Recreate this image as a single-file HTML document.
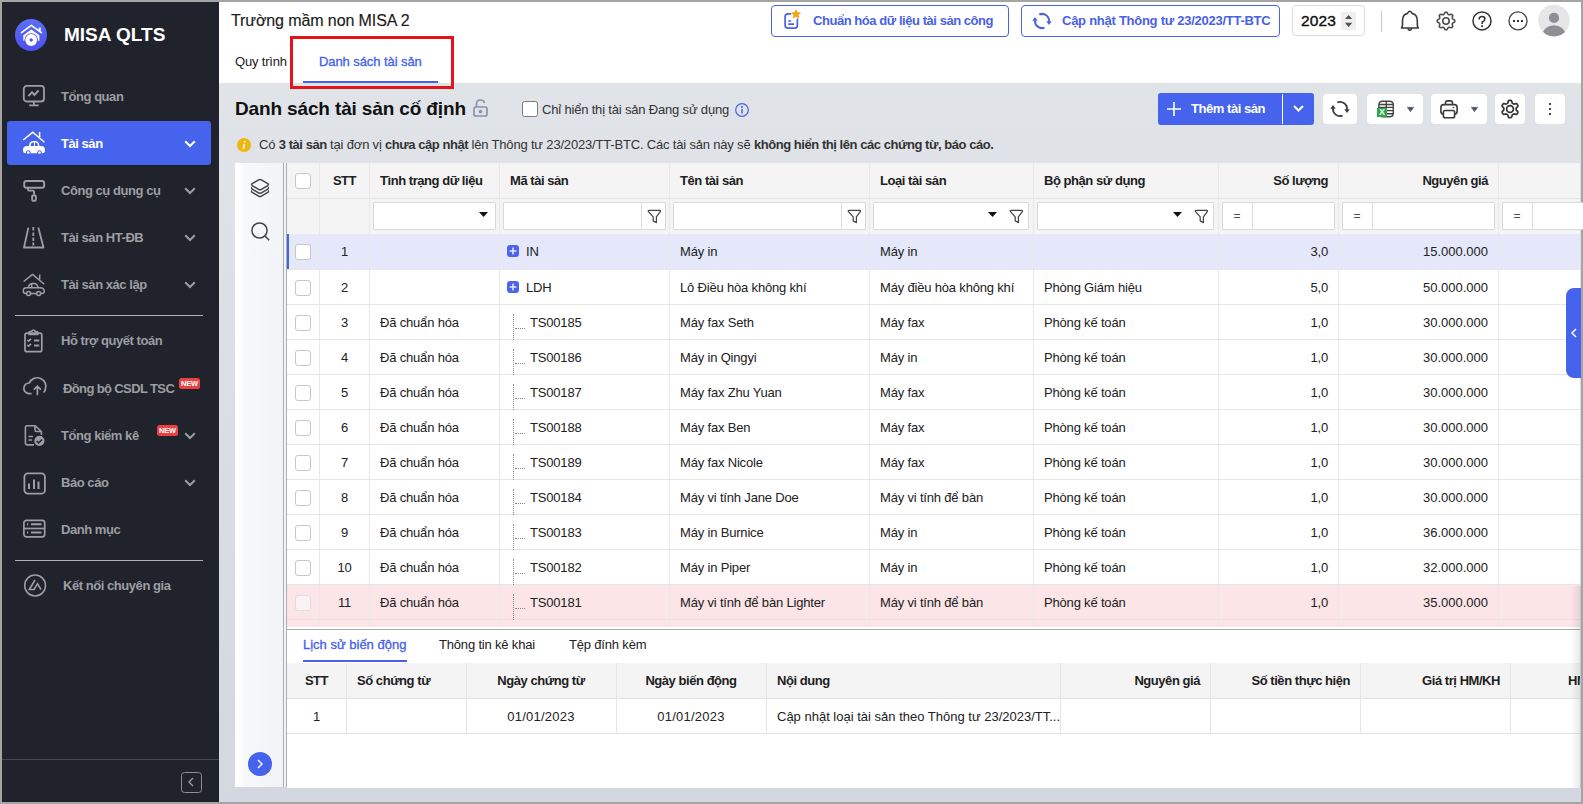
<!DOCTYPE html><html><head><meta charset="utf-8"><style>
*{box-sizing:border-box;margin:0;padding:0}
html,body{width:1583px;height:804px;overflow:hidden;background:#a4a4a4;font-family:"Liberation Sans",sans-serif;color:#212121}
div,span{position:absolute;white-space:nowrap}
svg{position:absolute;overflow:visible}
.b{font-weight:bold}
.t13{font-size:13px;line-height:16px;letter-spacing:-0.18px}
.t13.b,.b.t13{letter-spacing:-0.45px}
b{letter-spacing:-0.45px}
.mi{font-size:13px;line-height:16px;font-weight:bold;color:#9c9ea3;letter-spacing:-0.45px}
.sep{left:15px;width:188px;height:1px;background:#adb0b7}
.cb{width:16px;height:16px;border:1px solid #c7c7c7;border-radius:3px;background:#fff}
.fin{height:28px;border:1px solid #d9d9d9;border-radius:1px;background:#fff;top:202px}
.wb{top:94px;height:30px;background:#fff;border-radius:4px}
</style></head><body>
<div style="left:2px;top:2px;width:1579px;height:800px;background:linear-gradient(180deg,#e1e4e9 0px,#e0e3e8 100px,#d3d8df 800px)"></div>
<div style="left:2px;top:2px;width:217px;height:800px;background:#20232b"></div>
<div style="left:15px;top:19px;width:32px;height:32px;border-radius:50%;background:linear-gradient(180deg,#5a6ff7,#4b50ee)"></div>
<svg style="left:15px;top:19px" width="32" height="32" viewBox="0 0 32 32">
<path d="M6.5 13.6 L16.3 6.4 L26.3 13.6" fill="none" stroke="#fff" stroke-width="1.7" stroke-linecap="round" stroke-linejoin="round"/>
<path d="M23.6 8.6 h2.2 v3.6 h-2.2 Z" fill="#fff"/>
<path d="M8.3 16.3 L16.3 10.4 L24.4 16.3 V21.8 H8.3 Z" fill="#fff"/>
<circle cx="16.2" cy="21" r="6.8" fill="#4f58f0"/>
<circle cx="16.2" cy="21" r="5.9" fill="#fff"/>
<path d="M16.2 18.9 L18.3 21 L16.2 23.1 L14.1 21 Z" fill="#4f58f0"/>
</svg>
<div class="b" style="left:64px;top:24px;font-size:19px;line-height:22px;color:#fff">MISA QLTS</div>
<div style="left:7px;top:121px;width:204px;height:44px;border-radius:3px;background:#4563ec"></div>
<div class="mi" style="left:61px;top:89px;color:#9c9ea3">Tổng quan</div>
<div class="mi" style="left:61px;top:136px;color:#fff">Tài sản</div>
<svg style="left:184px;top:139.5px" width="12" height="8" viewBox="0 0 12 8"><path d="M1.2 1.3 L6 6 L10.8 1.3" fill="none" stroke="#fff" stroke-width="2"/></svg>
<div class="mi" style="left:61px;top:183px;color:#9c9ea3">Công cụ dụng cụ</div>
<svg style="left:184px;top:186.5px" width="12" height="8" viewBox="0 0 12 8"><path d="M1.2 1.3 L6 6 L10.8 1.3" fill="none" stroke="#9c9ea3" stroke-width="2"/></svg>
<div class="mi" style="left:61px;top:230px;color:#9c9ea3">Tài sản HT-ĐB</div>
<svg style="left:184px;top:233.5px" width="12" height="8" viewBox="0 0 12 8"><path d="M1.2 1.3 L6 6 L10.8 1.3" fill="none" stroke="#9c9ea3" stroke-width="2"/></svg>
<div class="mi" style="left:61px;top:277px;color:#9c9ea3">Tài sản xác lập</div>
<svg style="left:184px;top:280.5px" width="12" height="8" viewBox="0 0 12 8"><path d="M1.2 1.3 L6 6 L10.8 1.3" fill="none" stroke="#9c9ea3" stroke-width="2"/></svg>
<div class="mi" style="left:61px;top:333px;color:#9c9ea3">Hỗ trợ quyết toán</div>
<div class="mi" style="left:63px;top:381px;color:#9c9ea3;letter-spacing:-0.62px">Đồng bộ CSDL TSC</div>
<div class="mi" style="left:61px;top:428px;color:#9c9ea3">Tổng kiểm kê</div>
<svg style="left:184px;top:431.5px" width="12" height="8" viewBox="0 0 12 8"><path d="M1.2 1.3 L6 6 L10.8 1.3" fill="none" stroke="#9c9ea3" stroke-width="2"/></svg>
<div class="mi" style="left:61px;top:475px;color:#9c9ea3">Báo cáo</div>
<svg style="left:184px;top:478.5px" width="12" height="8" viewBox="0 0 12 8"><path d="M1.2 1.3 L6 6 L10.8 1.3" fill="none" stroke="#9c9ea3" stroke-width="2"/></svg>
<div class="mi" style="left:61px;top:522px;color:#9c9ea3">Danh mục</div>
<div class="mi" style="left:63px;top:578px;color:#9c9ea3">Kết nối chuyên gia</div>
<div style="left:179px;top:378px;width:21px;height:11px;background:#e8413f;border-radius:2.5px;color:#fff;font-size:7.5px;line-height:11px;font-weight:bold;text-align:center;letter-spacing:-0.2px">NEW</div>
<div style="left:157px;top:425px;width:21px;height:11px;background:#e8413f;border-radius:2.5px;color:#fff;font-size:7.5px;line-height:11px;font-weight:bold;text-align:center;letter-spacing:-0.2px">NEW</div>
<div class="sep" style="top:315px"></div>
<div class="sep" style="top:560px"></div>
<div style="left:2px;top:759px;width:217px;height:1px;background:#45484e"></div>
<div style="left:181px;top:772px;width:21px;height:21px;border:1px solid #8d8f94;border-radius:3.5px"></div>
<svg style="left:187px;top:777px" width="8" height="10" viewBox="0 0 8 10"><path d="M6 1 L2 5 L6 9" fill="none" stroke="#a0a2a7" stroke-width="1.3"/></svg>
<svg style="left:22px;top:85px" width="24" height="22" viewBox="0 0 24 22" fill="none" stroke="#9c9ea3" stroke-width="1.8">
<rect x="1.8" y="0.9" width="20.2" height="15.6" rx="3"/><path d="M11.9 16.5 v3.8 M7.2 20.4 h9.5"/><path d="M6.5 11.2 L10 7.2 L12.4 10 L16.6 5.5" stroke-width="2"/></svg>
<svg style="left:22px;top:131px" width="24" height="24" viewBox="0 0 24 24">
<path d="M1.2 9 L10.7 1.3 L22.5 11.3" fill="none" stroke="#fff" stroke-width="1.5"/><path d="M17.6 1 v5.5" stroke="#fff" stroke-width="1.5"/>
<path d="M6.8 16 Q7 10 11 10 H13.5 Q17.2 10 17.6 16 Z" fill="#fff"/>
<path d="M8.6 15 Q8.8 11.6 11.3 11.6 H12 V15 Z M13 11.6 H13.5 Q15.8 11.6 16 15 H13 Z" fill="#4563ec"/>
<path d="M1 19 Q1 15 5 15 H19 Q23 15 23 19 Q23 22.3 20.5 22.3 H3.5 Q1 22.3 1 19 Z" fill="#fff"/>
<circle cx="6.3" cy="21.5" r="2.3" fill="#4563ec"/><circle cx="17.5" cy="21.5" r="2.3" fill="#4563ec"/><circle cx="6.3" cy="21.5" r="1.3" fill="#fff"/><circle cx="17.5" cy="21.5" r="1.3" fill="#fff"/>
</svg>
<svg style="left:22px;top:178px" width="24" height="24" viewBox="0 0 24 24" fill="none" stroke="#9c9ea3" stroke-width="1.9">
<rect x="2.2" y="3" width="20" height="6.7" rx="2.3"/><path d="M6 9.7 V11.5 Q6 12.6 7.1 12.6 H10.9 Q12 12.6 12 13.7 V16.5"/><rect x="10.1" y="17.3" width="3.8" height="5.6" rx="1.9"/></svg>
<svg style="left:22px;top:226px" width="24" height="24" viewBox="0 0 24 24" fill="none" stroke="#9c9ea3" stroke-width="1.8" stroke-linejoin="round">
<path d="M6.4 1.6 L2 21.5 H21.5 L16.3 1.6"/><path d="M11.3 1 v3.5 M11.3 6.5 v3.5 M11.3 11.5 v3.5 M11.3 16.5 v3"/></svg>
<svg style="left:22px;top:272px" width="24" height="24" viewBox="0 0 24 24" fill="none" stroke="#9c9ea3" stroke-width="1.5" stroke-linejoin="round">
<path d="M1.6 9.5 L10.5 2.4 L22.3 12.3"/><path d="M17.7 2.5 v5"/>
<path d="M6.2 15.8 Q7 11.4 10.5 11.4 H12.5 Q15 11.4 16.2 15.8"/><path d="M9.7 11.6 V15.8"/>
<path d="M4.5 21.5 H3.8 Q1.3 21.5 1.3 19 V18.5 Q1.3 15.8 4.5 15.8 H18 Q22.3 16 22.3 19.2 Q22.3 21.5 19.5 21.5 H19 M8.8 21.5 H14.5"/>
<circle cx="6.6" cy="21.5" r="2"/><circle cx="16.7" cy="21.5" r="2"/></svg>
<svg style="left:22px;top:328px" width="22" height="26" viewBox="0 0 22 26" fill="none" stroke="#9c9ea3" stroke-width="1.7" stroke-linejoin="round">
<rect x="3" y="5.2" width="16.8" height="18.5" rx="2"/><path d="M7 6.5 V4.5 Q7 3.5 8.2 3.5 H9.5 Q10.5 2 11.4 2 Q12.3 2 13.3 3.5 H14.6 Q15.8 3.5 15.8 4.5 V6.5 Z"/>
<path d="M5.3 12 L6.6 13.2 L9 10.8 M5.3 17 L6.6 18.2 L9 15.8"/><path d="M12 12.5 H17.3 M12 17.5 H17.3" stroke-width="2"/></svg>
<svg style="left:22px;top:376px" width="26" height="20" viewBox="0 0 26 20" fill="none" stroke="#9c9ea3" stroke-width="1.7" stroke-linecap="round">
<path d="M9 17.6 H7 A5.3 5.3 0 0 1 7.3 7 A8 8 0 0 1 23.2 13.8 Q22.8 15.2 22 16"/><path d="M15.4 18.5 V10.3 M12.4 13.2 L15.4 10.2 L18.4 13.2"/></svg>
<svg style="left:23px;top:422px" width="22" height="24" viewBox="0 0 22 24" fill="none" stroke="#9c9ea3" stroke-width="1.6" stroke-linejoin="round">
<path d="M11 22.9 H4 Q2.4 22.9 2.4 21.3 V5.3 Q2.4 3.7 4 3.7 H12 L18.4 9.5 V13"/><path d="M12 3.7 V8 Q12 9.5 13.5 9.5 H18.4"/><path d="M5.5 14.5 h4.5 M5.5 18 h3.5"/>
</svg>
<svg style="left:32px;top:434px" width="14" height="14" viewBox="0 0 14 14"><circle cx="7.4" cy="6.9" r="5.8" fill="#9c9ea3" stroke="#20232b" stroke-width="1.4"/><path d="M4.6 7 L6.6 8.9 L10 5.4" fill="none" stroke="#20232b" stroke-width="1.5"/></svg>
<svg style="left:22px;top:471px" width="24" height="24" viewBox="0 0 24 24" fill="none" stroke="#9c9ea3" stroke-width="1.8">
<rect x="2.4" y="2.4" width="20.5" height="20.3" rx="3.5"/><path d="M7 18 V12.5 M12 18 V8.5 M16.5 18 V10.5" stroke-width="2"/></svg>
<svg style="left:22px;top:518px" width="24" height="21" viewBox="0 0 24 21" fill="none" stroke="#9c9ea3" stroke-width="1.7">
<rect x="1.9" y="2.3" width="20.8" height="16.5" rx="2.5"/><path d="M1.9 10.5 H22.7"/><path d="M5 6.3 h1.2 M5 14.5 h1.2 M9 6.3 H19.5 M9 14.5 H19.5" stroke-width="2"/></svg>
<svg style="left:23px;top:573px" width="24" height="24" viewBox="0 0 24 24" fill="none" stroke="#9c9ea3" stroke-width="1.5">
<circle cx="12.1" cy="12.5" r="10.4"/><path d="M12 7 L6.3 16.5 H11 L14.5 10.8 L18 16.5" stroke-width="1.6" stroke-linejoin="miter"/></svg>
<div style="left:219px;top:2px;width:1362px;height:81px;background:#fff"></div>
<div style="left:231px;top:11px;font-size:16px;line-height:19px;color:#1a1a1a;letter-spacing:-0.1px;-webkit-text-stroke:0.15px #1a1a1a">Trường mầm non MISA 2</div>
<div style="left:771px;top:5px;width:238px;height:32px;border:1px solid #4a62eb;border-radius:4px"></div>
<div class="b t13" style="left:813px;top:13px;color:#4a5fe6">Chuẩn hóa dữ liệu tài sản công</div>
<svg style="left:784px;top:10px" width="17" height="20" viewBox="0 0 17 20" fill="none" stroke="#4a5fe6" stroke-width="1.7" stroke-linecap="round">
<path d="M6.5 3.9 H4 Q1.1 3.9 1.1 6.8 V15.3 Q1.1 18.2 4 18.2 H10.5 Q13.4 18.2 13.4 15.3 V9.3"/><path d="M4.2 11 H7.2 M4.2 14.1 H10" stroke-linecap="butt"/></svg>
<svg style="left:791px;top:8.7px" width="10" height="10" viewBox="0 0 10 10"><path d="M5.00 0.70 L6.29 3.52 L9.37 3.88 L7.09 5.98 L7.70 9.02 L5.00 7.50 L2.30 9.02 L2.91 5.98 L0.63 3.88 L3.71 3.52 Z" fill="#f5a50b" stroke="#f5a50b" stroke-width="0.8" stroke-linejoin="round"/></svg>
<div style="left:1021px;top:5px;width:259px;height:32px;border:1px solid #4a62eb;border-radius:4px"></div>
<div class="b t13" style="left:1062px;top:13px;color:#4a5fe6;letter-spacing:-0.26px">Cập nhật Thông tư 23/2023/TT-BTC</div>
<svg style="left:1030px;top:9px" width="24" height="24" viewBox="0 0 24 24" fill="none" stroke="#4a5fe6" stroke-width="2"><path d="M9.30 5.50 A7 7 0 0 1 19.00 12.60"/><path d="M14.50 18.60 A7 7 0 0 1 5.00 11.40"/><path d="M16.30 12.30 H21.70 L19.00 15.90 Z M2.30 11.70 H7.70 L5.00 8.10 Z" fill="#4a5fe6" stroke="none"/></svg>
<div style="left:1292px;top:5px;width:73px;height:31px;border:1px solid #dcdcdc;border-radius:4px"></div>
<div style="left:1301px;top:12px;font-size:15.5px;line-height:18px;color:#111;-webkit-text-stroke:0.4px #111;letter-spacing:0.1px">2023</div>
<div style="left:1341px;top:12px;width:15px;height:18px;background:#efefef"></div>
<svg style="left:1345px;top:15px" width="8" height="13" viewBox="0 0 8 13"><path d="M0 4.1 L3.6 0 L7.2 4.1 Z M0 7.7 L3.6 12.1 L7.2 7.7 Z" fill="#505050"/></svg>
<div style="left:1381px;top:11px;width:1px;height:21px;background:#c8c8c8"></div>
<svg style="left:1400px;top:10px" width="20" height="22" viewBox="0 0 20 22" fill="none" stroke="#3a3a3a" stroke-width="1.6" stroke-linejoin="round">
<path d="M1.4 18 Q2.5 17 2.5 14.5 V10.5 Q2.5 4.6 7.6 3.4 Q8.2 1.3 9.8 1.3 Q11.4 1.3 12 3.4 Q17.3 4.6 17.3 10.5 V14.5 Q17.3 17 18.4 18 Z"/><path d="M8.1 18.3 Q8.2 20.3 9.8 20.3 Q11.4 20.3 11.5 18.3"/></svg>
<svg style="left:1436px;top:11px" width="20" height="20" viewBox="0 0 20 20" fill="none" stroke="#4d4d4d" stroke-width="1.6" stroke-linejoin="round">
<path d="M10.00 1.20 L10.57 1.27 L11.11 1.57 L11.53 2.30 L11.86 3.04 L12.23 3.42 L12.64 3.63 L13.07 3.77 L13.60 3.76 L14.36 3.47 L15.17 3.26 L15.77 3.42 L16.22 3.78 L16.58 4.23 L16.74 4.83 L16.53 5.64 L16.24 6.40 L16.23 6.93 L16.37 7.36 L16.58 7.77 L16.96 8.14 L17.70 8.47 L18.43 8.89 L18.73 9.43 L18.80 10.00 L18.73 10.57 L18.43 11.11 L17.70 11.53 L16.96 11.86 L16.58 12.23 L16.37 12.64 L16.23 13.07 L16.24 13.60 L16.53 14.36 L16.74 15.17 L16.58 15.77 L16.22 16.22 L15.77 16.58 L15.17 16.74 L14.36 16.53 L13.60 16.24 L13.07 16.23 L12.64 16.37 L12.23 16.58 L11.86 16.96 L11.53 17.70 L11.11 18.43 L10.57 18.73 L10.00 18.80 L9.43 18.73 L8.89 18.43 L8.47 17.70 L8.14 16.96 L7.77 16.58 L7.36 16.37 L6.93 16.23 L6.40 16.24 L5.64 16.53 L4.83 16.74 L4.23 16.58 L3.78 16.22 L3.42 15.77 L3.26 15.17 L3.47 14.36 L3.76 13.60 L3.77 13.07 L3.63 12.64 L3.42 12.23 L3.04 11.86 L2.30 11.53 L1.57 11.11 L1.27 10.57 L1.20 10.00 L1.27 9.43 L1.57 8.89 L2.30 8.47 L3.04 8.14 L3.42 7.77 L3.63 7.36 L3.77 6.93 L3.76 6.40 L3.47 5.64 L3.26 4.83 L3.42 4.23 L3.78 3.78 L4.23 3.42 L4.83 3.26 L5.64 3.47 L6.40 3.76 L6.93 3.77 L7.36 3.63 L7.77 3.42 L8.14 3.04 L8.47 2.30 L8.89 1.57 L9.43 1.27 Z"/><circle cx="10.0" cy="10.0" r="3.2"/></svg>
<svg style="left:1472px;top:11px" width="20" height="20" viewBox="0 0 20 20" fill="none" stroke="#333" stroke-width="1.5">
<circle cx="10" cy="9.9" r="9"/><path d="M7.1 8.4 Q7.1 5.6 10 5.6 Q12.9 5.6 12.9 8.1 Q12.9 9.9 10.1 11.2 V13"/><rect x="9.2" y="14.3" width="1.8" height="1.8" fill="#333" stroke="none"/></svg>
<svg style="left:1508px;top:11px" width="20" height="20" viewBox="0 0 20 20" fill="none" stroke="#4a4a4a" stroke-width="1.4">
<circle cx="10" cy="9.9" r="9"/><rect x="5" y="9" width="2" height="2" fill="#333" stroke="none"/><rect x="9" y="9" width="2" height="2" fill="#333" stroke="none"/><rect x="13" y="9" width="2" height="2" fill="#333" stroke="none"/></svg>
<svg style="left:1538px;top:5px" width="32" height="32" viewBox="0 0 32 32">
<defs><clipPath id="avc"><circle cx="16" cy="15.6" r="15.8"/></clipPath></defs>
<circle cx="16" cy="15.6" r="15.8" fill="#e6e6e8"/><circle cx="16" cy="12.9" r="5.1" fill="#8e8f94"/><ellipse cx="16" cy="29.4" rx="11.3" ry="9.2" fill="#8e8f94" clip-path="url(#avc)"/></svg>
<div class="t13" style="left:235px;top:54px;color:#212121">Quy trình</div>
<div class="t13" style="left:319px;top:54px;color:#4560ea;-webkit-text-stroke:0.3px #4560ea;letter-spacing:-0.08px">Danh sách tài sản</div>
<div style="left:303px;top:81px;width:135px;height:2px;background:#4a62eb"></div>
<div style="left:290px;top:36px;width:164px;height:53px;border:3px solid #e3141b"></div>
<div class="b" style="left:235px;top:98px;font-size:19px;line-height:22px;color:#111;letter-spacing:-0.14px">Danh sách tài sản cố định</div>
<svg style="left:473px;top:99px" width="15" height="18" viewBox="0 0 15 18" fill="none" stroke="#8b93a7" stroke-width="1.7">
<rect x="1" y="8" width="13" height="9" rx="2"/><path d="M3.5 8 V5 Q3.5 1 7.5 1 Q11 1 11.5 4"/><circle cx="7.5" cy="12.5" r="1" fill="#8b93a7"/></svg>
<div class="cb" style="left:522px;top:101px;border-color:#7a7a7a;border-radius:2.5px"></div>
<div class="t13" style="left:542px;top:102px;color:#333">Chỉ hiển thị tài sản Đang sử dụng</div>
<svg style="left:735px;top:103px" width="14" height="14" viewBox="0 0 14 14" fill="none" stroke="#4a62eb" stroke-width="1.2">
<circle cx="7" cy="7" r="6.3"/><path d="M7 6 v4.5" stroke-width="1.5"/><circle cx="7" cy="4" r="0.5" fill="#4a62eb"/></svg>
<div style="left:1158px;top:93px;width:156px;height:32px;border-radius:3px;background:#4563ec"></div>
<div style="left:1282px;top:94px;width:1px;height:30px;background:#fff"></div>
<svg style="left:1167px;top:102px" width="14" height="14" viewBox="0 0 14 14"><path d="M7 0 v14 M0 7 h14" stroke="#fff" stroke-width="1.6"/></svg>
<div class="b t13" style="left:1191px;top:101px;color:#fff">Thêm tài sản</div>
<svg style="left:1293px;top:105px" width="11" height="7" viewBox="0 0 11 7"><path d="M1 1 L5.5 5.5 L10 1" fill="none" stroke="#fff" stroke-width="2"/></svg>
<div class="wb" style="left:1323px;width:34px"></div>
<svg style="left:1328px;top:97px" width="24" height="24" viewBox="0 0 24 24" fill="none" stroke="#3a3a3a" stroke-width="1.8"><path d="M9.30 5.50 A7 7 0 0 1 19.00 12.60"/><path d="M14.50 18.60 A7 7 0 0 1 5.00 11.40"/><path d="M16.30 12.30 H21.70 L19.00 15.90 Z M2.30 11.70 H7.70 L5.00 8.10 Z" fill="#3a3a3a" stroke="none"/></svg>
<div class="wb" style="left:1367px;width:56px"></div>
<svg style="left:1378px;top:100px" width="17" height="18" viewBox="0 0 17 18" fill="none" stroke="#444" stroke-width="1.4">
<path d="M4.5 1.2 H11.5 Q15.3 1.2 15.3 5 V13 Q15.3 16.8 11.5 16.8 H4.5 Q0.8 16.8 0.8 13 V5 Q0.8 1.2 4.5 1.2 Z"/><path d="M0.8 4.5 H15.3 M0.8 7.4 H15.3 M0.8 10.6 H15.3 M0.8 13.8 H15.3 M8.3 1.2 V16.8"/></svg>
<div class="b" style="left:1377px;top:108px;width:10px;height:9px;background:#2aa84a;color:#fff;font-size:9px;line-height:9.5px;text-align:center">X</div>
<svg style="left:1407px;top:107px" width="7" height="5" viewBox="0 0 7 5"><path d="M0.3 0.3 H6.7 L3.5 4.7 Z" fill="#4b5468" stroke="#4b5468" stroke-width="0.6" stroke-linejoin="round"/></svg>
<div class="wb" style="left:1431px;width:56px"></div>
<svg style="left:1440px;top:100px" width="18" height="19" viewBox="0 0 18 19" fill="none" stroke="#3a3a3a" stroke-width="1.6" stroke-linejoin="round">
<path d="M5.5 4.6 V3 Q5.5 0.9 7.5 0.9 H10.5 Q12.5 0.9 12.5 3 V4.6"/><path d="M3.5 14 Q0.9 14 0.9 11.4 V7.3 Q0.9 4.6 3.6 4.6 H14.4 Q17.1 4.6 17.1 7.3 V11.4 Q17.1 14 14.5 14"/>
<path d="M5.2 10.5 H12.8 Q14.6 10.5 14.6 12.3 V16 Q14.6 17.8 12.8 17.8 H5.2 Q3.4 17.8 3.4 16 V12.3 Q3.4 10.5 5.2 10.5 Z"/><path d="M12.6 7.6 H14.2" stroke-width="1.2"/></svg>
<svg style="left:1471px;top:107px" width="7" height="5" viewBox="0 0 7 5"><path d="M0.3 0.3 H6.7 L3.5 4.7 Z" fill="#4b5468" stroke="#4b5468" stroke-width="0.6" stroke-linejoin="round"/></svg>
<div class="wb" style="left:1495px;width:30px"></div>
<svg style="left:1500px;top:99px" width="20" height="20" viewBox="0 0 20 20" fill="none" stroke="#333" stroke-width="1.7" stroke-linejoin="round">
<path d="M10.00 1.40 L10.56 1.43 L11.11 1.55 L11.61 1.91 L11.92 2.85 L12.11 3.79 L12.40 4.20 L12.75 4.43 L13.10 4.63 L13.45 4.84 L13.82 5.02 L14.32 5.07 L15.23 4.77 L16.20 4.56 L16.76 4.81 L17.14 5.23 L17.45 5.70 L17.70 6.20 L17.88 6.74 L17.81 7.35 L17.15 8.08 L16.43 8.72 L16.22 9.18 L16.20 9.59 L16.20 10.00 L16.20 10.41 L16.22 10.82 L16.43 11.28 L17.15 11.92 L17.81 12.65 L17.88 13.26 L17.70 13.80 L17.45 14.30 L17.14 14.77 L16.76 15.19 L16.20 15.44 L15.23 15.23 L14.32 14.93 L13.82 14.98 L13.45 15.16 L13.10 15.37 L12.75 15.57 L12.40 15.80 L12.11 16.21 L11.92 17.15 L11.61 18.09 L11.11 18.45 L10.56 18.57 L10.00 18.60 L9.44 18.57 L8.89 18.45 L8.39 18.09 L8.08 17.15 L7.89 16.21 L7.60 15.80 L7.25 15.57 L6.90 15.37 L6.55 15.16 L6.18 14.98 L5.68 14.93 L4.77 15.23 L3.80 15.44 L3.24 15.19 L2.86 14.77 L2.55 14.30 L2.30 13.80 L2.12 13.26 L2.19 12.65 L2.85 11.92 L3.57 11.28 L3.78 10.82 L3.80 10.41 L3.80 10.00 L3.80 9.59 L3.78 9.18 L3.57 8.72 L2.85 8.08 L2.19 7.35 L2.12 6.74 L2.30 6.20 L2.55 5.70 L2.86 5.23 L3.24 4.81 L3.80 4.56 L4.77 4.77 L5.68 5.07 L6.18 5.02 L6.55 4.84 L6.90 4.63 L7.25 4.43 L7.60 4.20 L7.89 3.79 L8.08 2.85 L8.39 1.91 L8.89 1.55 L9.44 1.43 Z"/><circle cx="10.0" cy="10.0" r="3.4"/></svg>
<div class="wb" style="left:1535px;width:30px"></div>
<svg style="left:1549px;top:103px" width="2" height="12" viewBox="0 0 2 12"><rect x="0" y="0" width="2" height="2" fill="#45465a"/><rect x="0" y="5" width="2" height="2" fill="#45465a"/><rect x="0" y="10" width="2" height="2" fill="#45465a"/></svg>
<svg style="left:237px;top:138px" width="14" height="14" viewBox="0 0 14 14"><circle cx="7" cy="7" r="7" fill="#f0b70f"/><path d="M7.4 5.8 L6.4 10.8" stroke="#fff" stroke-width="1.6"/><circle cx="7.7" cy="3.7" r="0.9" fill="#fff"/></svg>
<div class="t13" style="left:259px;top:137px;color:#333">Có <b>3 tài sản</b> tại đơn vị <b>chưa cập nhật</b> lên Thông tư 23/2023/TT-BTC. Các tài sản này sẽ <b>không hiển thị lên các chứng từ, báo cáo.</b></div>
<div style="left:235px;top:163px;width:48px;height:624px;background:linear-gradient(90deg,#fff 0px,#fff 3px,#f7f8fa 10px,#f1f3f6 48px)"></div>
<div style="left:283px;top:163px;width:1px;height:624px;background:#a9acb1"></div>
<div style="left:284px;top:163px;width:2px;height:624px;background:#f3f4f6"></div>
<div style="left:286px;top:163px;width:1px;height:624px;background:#a9acb1"></div>
<svg style="left:250px;top:178px" width="20" height="21" viewBox="0 0 20 21" fill="none" stroke="#444" stroke-width="1.5" stroke-linejoin="round">
<path d="M8.6 1.8 Q10 1 11.4 1.8 L17.8 5.6 Q19 6.6 17.8 7.6 L11.4 11.4 Q10 12.2 8.6 11.4 L2.2 7.6 Q1 6.6 2.2 5.6 Z"/>
<path d="M2 9.3 Q1 10.2 2.2 11.1 L8.6 14.9 Q10 15.7 11.4 14.9 L17.8 11.1 Q19 10.2 18 9.3"/>
<path d="M2 12.6 Q1 13.5 2.2 14.4 L8.6 18.2 Q10 19 11.4 18.2 L17.8 14.4 Q19 13.5 18 12.6"/></svg>
<svg style="left:250px;top:221px" width="21" height="21" viewBox="0 0 21 21" fill="none" stroke="#444" stroke-width="1.5">
<circle cx="9.5" cy="9.5" r="7.6"/><path d="M15 15 L19.2 19.3"/></svg>
<div style="left:248px;top:752px;width:24px;height:24px;border-radius:50%;background:#4563ec"></div>
<svg style="left:256px;top:759px" width="8" height="10" viewBox="0 0 8 10"><path d="M2 1 L6 5 L2 9" fill="none" stroke="#fff" stroke-width="1.4"/></svg>
<div style="left:287px;top:163px;width:1293px;height:625px;background:#fff"></div>
<div style="left:287px;top:163px;width:1293px;height:71px;background:#f4f4f4"></div>
<div style="left:287px;top:198px;width:1293px;height:1px;background:#e3e3e3"></div>
<div style="left:287px;top:234px;width:1293px;height:35px;background:#e4e8fa"></div>
<div style="left:287px;top:269px;width:1293px;height:1px;background:#e6e6e6"></div>
<div style="left:287px;top:304px;width:1293px;height:1px;background:#e6e6e6"></div>
<div style="left:287px;top:339px;width:1293px;height:1px;background:#e6e6e6"></div>
<div style="left:287px;top:374px;width:1293px;height:1px;background:#e6e6e6"></div>
<div style="left:287px;top:409px;width:1293px;height:1px;background:#e6e6e6"></div>
<div style="left:287px;top:444px;width:1293px;height:1px;background:#e6e6e6"></div>
<div style="left:287px;top:479px;width:1293px;height:1px;background:#e6e6e6"></div>
<div style="left:287px;top:514px;width:1293px;height:1px;background:#e6e6e6"></div>
<div style="left:287px;top:549px;width:1293px;height:1px;background:#e6e6e6"></div>
<div style="left:287px;top:584px;width:1293px;height:1px;background:#e6e6e6"></div>
<div style="left:287px;top:585px;width:1293px;height:42px;background:#fbe5e6"></div>
<div style="left:287px;top:619px;width:1293px;height:1px;background:#efdcdc"></div>
<div style="left:287px;top:234px;width:2px;height:35px;background:#4563ec"></div>
<div style="left:319px;top:163px;width:1px;height:464px;background:#e8e8e8"></div>
<div style="left:369px;top:163px;width:1px;height:464px;background:#e8e8e8"></div>
<div style="left:499px;top:163px;width:1px;height:464px;background:#e8e8e8"></div>
<div style="left:669px;top:163px;width:1px;height:464px;background:#e8e8e8"></div>
<div style="left:869px;top:163px;width:1px;height:464px;background:#e8e8e8"></div>
<div style="left:1033px;top:163px;width:1px;height:464px;background:#e8e8e8"></div>
<div style="left:1218px;top:163px;width:1px;height:464px;background:#e8e8e8"></div>
<div style="left:1338px;top:163px;width:1px;height:464px;background:#e8e8e8"></div>
<div style="left:1498px;top:163px;width:1px;height:464px;background:#e8e8e8"></div>
<div style="left:287px;top:627px;width:1293px;height:161px;background:#fff"></div>
<div style="left:287px;top:629px;width:1293px;height:1px;background:#aaaaaa"></div>
<div class="cb" style="left:295px;top:173px"></div>
<div class="b t13" style="left:320px;top:173px;width:49px;text-align:center">STT</div>
<div class="b t13" style="left:380px;top:173px">Tình trạng dữ liệu</div>
<div class="b t13" style="left:510px;top:173px">Mã tài sản</div>
<div class="b t13" style="left:680px;top:173px">Tên tài sản</div>
<div class="b t13" style="left:880px;top:173px">Loại tài sản</div>
<div class="b t13" style="left:1044px;top:173px">Bộ phận sử dụng</div>
<div class="b t13" style="left:1028px;top:173px;width:300px;text-align:right">Số lượng</div>
<div class="b t13" style="left:1188px;top:173px;width:300px;text-align:right">Nguyên giá</div>
<div class="fin" style="left:373px;width:123px"></div>
<svg style="left:479px;top:212px" width="9" height="5" viewBox="0 0 9 5"><path d="M0 0 H9 L4.5 5 Z" fill="#111"/></svg>
<div class="fin" style="left:503px;width:163px"></div>
<div style="left:641px;top:203px;width:1px;height:26px;background:#dcdcdc"></div>
<svg style="left:647px;top:209px" width="15" height="15" viewBox="0 0 15 15"><path d="M2.2 1.3 H12.6 Q14 1.3 13.3 2.7 L9.4 7.8 V13.6 L6.2 11.9 V7.8 L1.5 2.7 Q0.8 1.3 2.2 1.3 Z" fill="none" stroke="#444" stroke-width="1.25" stroke-linejoin="round"/></svg>
<div class="fin" style="left:673px;width:193px"></div>
<div style="left:841px;top:203px;width:1px;height:26px;background:#dcdcdc"></div>
<svg style="left:847px;top:209px" width="15" height="15" viewBox="0 0 15 15"><path d="M2.2 1.3 H12.6 Q14 1.3 13.3 2.7 L9.4 7.8 V13.6 L6.2 11.9 V7.8 L1.5 2.7 Q0.8 1.3 2.2 1.3 Z" fill="none" stroke="#444" stroke-width="1.25" stroke-linejoin="round"/></svg>
<div class="fin" style="left:873px;width:156px"></div>
<svg style="left:988px;top:212px" width="9" height="5" viewBox="0 0 9 5"><path d="M0 0 H9 L4.5 5 Z" fill="#111"/></svg>
<svg style="left:1009px;top:209px" width="15" height="15" viewBox="0 0 15 15"><path d="M2.2 1.3 H12.6 Q14 1.3 13.3 2.7 L9.4 7.8 V13.6 L6.2 11.9 V7.8 L1.5 2.7 Q0.8 1.3 2.2 1.3 Z" fill="none" stroke="#444" stroke-width="1.25" stroke-linejoin="round"/></svg>
<div class="fin" style="left:1037px;width:177px"></div>
<svg style="left:1173px;top:212px" width="9" height="5" viewBox="0 0 9 5"><path d="M0 0 H9 L4.5 5 Z" fill="#111"/></svg>
<svg style="left:1194px;top:209px" width="15" height="15" viewBox="0 0 15 15"><path d="M2.2 1.3 H12.6 Q14 1.3 13.3 2.7 L9.4 7.8 V13.6 L6.2 11.9 V7.8 L1.5 2.7 Q0.8 1.3 2.2 1.3 Z" fill="none" stroke="#444" stroke-width="1.25" stroke-linejoin="round"/></svg>
<div class="fin" style="left:1222px;width:113px"></div>
<div style="left:1252px;top:203px;width:1px;height:26px;background:#dcdcdc"></div>
<div style="left:1222px;top:209px;width:30px;text-align:center;font-size:12px;line-height:14px;color:#555">=</div>
<div class="fin" style="left:1342px;width:153px"></div>
<div style="left:1372px;top:203px;width:1px;height:26px;background:#dcdcdc"></div>
<div style="left:1342px;top:209px;width:30px;text-align:center;font-size:12px;line-height:14px;color:#555">=</div>
<div class="fin" style="left:1502px;width:90px"></div>
<div style="left:1532px;top:203px;width:1px;height:26px;background:#dcdcdc"></div>
<div style="left:1502px;top:209px;width:30px;text-align:center;font-size:12px;line-height:14px;color:#555">=</div>
<div class="cb" style="left:295px;top:244px;"></div>
<div class="t13" style="left:320px;top:244px;width:49px;text-align:center">1</div>
<svg style="left:507px;top:245px" width="12" height="12" viewBox="0 0 12 12"><rect x="0" y="0" width="12" height="12" rx="3.2" fill="#4a64ec"/><path d="M6 2.6 v6.8 M2.6 6 h6.8" stroke="#e8ecff" stroke-width="1.5"/></svg>
<div class="t13" style="left:526px;top:244px">IN</div>
<div class="t13" style="left:680px;top:244px">Máy in</div>
<div class="t13" style="left:880px;top:244px">Máy in</div>
<div class="t13" style="left:1028px;top:244px;width:300px;text-align:right">3,0</div>
<div class="t13" style="left:1188px;top:244px;width:300px;text-align:right;letter-spacing:0">15.000.000</div>
<div class="cb" style="left:295px;top:280px;"></div>
<div class="t13" style="left:320px;top:280px;width:49px;text-align:center">2</div>
<svg style="left:507px;top:281px" width="12" height="12" viewBox="0 0 12 12"><rect x="0" y="0" width="12" height="12" rx="3.2" fill="#4a64ec"/><path d="M6 2.6 v6.8 M2.6 6 h6.8" stroke="#e8ecff" stroke-width="1.5"/></svg>
<div class="t13" style="left:526px;top:280px">LDH</div>
<div class="t13" style="left:680px;top:280px">Lô Điều hòa không khí</div>
<div class="t13" style="left:880px;top:280px">Máy điều hòa không khí</div>
<div class="t13" style="left:1044px;top:280px">Phòng Giám hiệu</div>
<div class="t13" style="left:1028px;top:280px;width:300px;text-align:right">5,0</div>
<div class="t13" style="left:1188px;top:280px;width:300px;text-align:right;letter-spacing:0">50.000.000</div>
<div class="cb" style="left:295px;top:315px;"></div>
<div class="t13" style="left:320px;top:315px;width:49px;text-align:center">3</div>
<div class="t13" style="left:380px;top:315px">Đã chuẩn hóa</div>
<div style="left:513px;top:314px;width:0;height:26px;border-left:1px dotted #8a8a8a"></div>
<div style="left:515px;top:328px;width:10px;height:0;border-top:1px dotted #8a8a8a"></div>
<div class="t13" style="left:530px;top:315px">TS00185</div>
<div class="t13" style="left:680px;top:315px">Máy fax Seth</div>
<div class="t13" style="left:880px;top:315px">Máy fax</div>
<div class="t13" style="left:1044px;top:315px">Phòng kế toán</div>
<div class="t13" style="left:1028px;top:315px;width:300px;text-align:right">1,0</div>
<div class="t13" style="left:1188px;top:315px;width:300px;text-align:right;letter-spacing:0">30.000.000</div>
<div class="cb" style="left:295px;top:350px;"></div>
<div class="t13" style="left:320px;top:350px;width:49px;text-align:center">4</div>
<div class="t13" style="left:380px;top:350px">Đã chuẩn hóa</div>
<div style="left:513px;top:349px;width:0;height:26px;border-left:1px dotted #8a8a8a"></div>
<div style="left:515px;top:363px;width:10px;height:0;border-top:1px dotted #8a8a8a"></div>
<div class="t13" style="left:530px;top:350px">TS00186</div>
<div class="t13" style="left:680px;top:350px">Máy in Qingyi</div>
<div class="t13" style="left:880px;top:350px">Máy in</div>
<div class="t13" style="left:1044px;top:350px">Phòng kế toán</div>
<div class="t13" style="left:1028px;top:350px;width:300px;text-align:right">1,0</div>
<div class="t13" style="left:1188px;top:350px;width:300px;text-align:right;letter-spacing:0">30.000.000</div>
<div class="cb" style="left:295px;top:385px;"></div>
<div class="t13" style="left:320px;top:385px;width:49px;text-align:center">5</div>
<div class="t13" style="left:380px;top:385px">Đã chuẩn hóa</div>
<div style="left:513px;top:384px;width:0;height:26px;border-left:1px dotted #8a8a8a"></div>
<div style="left:515px;top:398px;width:10px;height:0;border-top:1px dotted #8a8a8a"></div>
<div class="t13" style="left:530px;top:385px">TS00187</div>
<div class="t13" style="left:680px;top:385px">Máy fax Zhu Yuan</div>
<div class="t13" style="left:880px;top:385px">Máy fax</div>
<div class="t13" style="left:1044px;top:385px">Phòng kế toán</div>
<div class="t13" style="left:1028px;top:385px;width:300px;text-align:right">1,0</div>
<div class="t13" style="left:1188px;top:385px;width:300px;text-align:right;letter-spacing:0">30.000.000</div>
<div class="cb" style="left:295px;top:420px;"></div>
<div class="t13" style="left:320px;top:420px;width:49px;text-align:center">6</div>
<div class="t13" style="left:380px;top:420px">Đã chuẩn hóa</div>
<div style="left:513px;top:419px;width:0;height:26px;border-left:1px dotted #8a8a8a"></div>
<div style="left:515px;top:433px;width:10px;height:0;border-top:1px dotted #8a8a8a"></div>
<div class="t13" style="left:530px;top:420px">TS00188</div>
<div class="t13" style="left:680px;top:420px">Máy fax Ben</div>
<div class="t13" style="left:880px;top:420px">Máy fax</div>
<div class="t13" style="left:1044px;top:420px">Phòng kế toán</div>
<div class="t13" style="left:1028px;top:420px;width:300px;text-align:right">1,0</div>
<div class="t13" style="left:1188px;top:420px;width:300px;text-align:right;letter-spacing:0">30.000.000</div>
<div class="cb" style="left:295px;top:455px;"></div>
<div class="t13" style="left:320px;top:455px;width:49px;text-align:center">7</div>
<div class="t13" style="left:380px;top:455px">Đã chuẩn hóa</div>
<div style="left:513px;top:454px;width:0;height:26px;border-left:1px dotted #8a8a8a"></div>
<div style="left:515px;top:468px;width:10px;height:0;border-top:1px dotted #8a8a8a"></div>
<div class="t13" style="left:530px;top:455px">TS00189</div>
<div class="t13" style="left:680px;top:455px">Máy fax Nicole</div>
<div class="t13" style="left:880px;top:455px">Máy fax</div>
<div class="t13" style="left:1044px;top:455px">Phòng kế toán</div>
<div class="t13" style="left:1028px;top:455px;width:300px;text-align:right">1,0</div>
<div class="t13" style="left:1188px;top:455px;width:300px;text-align:right;letter-spacing:0">30.000.000</div>
<div class="cb" style="left:295px;top:490px;"></div>
<div class="t13" style="left:320px;top:490px;width:49px;text-align:center">8</div>
<div class="t13" style="left:380px;top:490px">Đã chuẩn hóa</div>
<div style="left:513px;top:489px;width:0;height:26px;border-left:1px dotted #8a8a8a"></div>
<div style="left:515px;top:503px;width:10px;height:0;border-top:1px dotted #8a8a8a"></div>
<div class="t13" style="left:530px;top:490px">TS00184</div>
<div class="t13" style="left:680px;top:490px">Máy vi tính Jane Doe</div>
<div class="t13" style="left:880px;top:490px">Máy vi tính để bàn</div>
<div class="t13" style="left:1044px;top:490px">Phòng kế toán</div>
<div class="t13" style="left:1028px;top:490px;width:300px;text-align:right">1,0</div>
<div class="t13" style="left:1188px;top:490px;width:300px;text-align:right;letter-spacing:0">30.000.000</div>
<div class="cb" style="left:295px;top:525px;"></div>
<div class="t13" style="left:320px;top:525px;width:49px;text-align:center">9</div>
<div class="t13" style="left:380px;top:525px">Đã chuẩn hóa</div>
<div style="left:513px;top:524px;width:0;height:26px;border-left:1px dotted #8a8a8a"></div>
<div style="left:515px;top:538px;width:10px;height:0;border-top:1px dotted #8a8a8a"></div>
<div class="t13" style="left:530px;top:525px">TS00183</div>
<div class="t13" style="left:680px;top:525px">Máy in Burnice</div>
<div class="t13" style="left:880px;top:525px">Máy in</div>
<div class="t13" style="left:1044px;top:525px">Phòng kế toán</div>
<div class="t13" style="left:1028px;top:525px;width:300px;text-align:right">1,0</div>
<div class="t13" style="left:1188px;top:525px;width:300px;text-align:right;letter-spacing:0">36.000.000</div>
<div class="cb" style="left:295px;top:560px;"></div>
<div class="t13" style="left:320px;top:560px;width:49px;text-align:center">10</div>
<div class="t13" style="left:380px;top:560px">Đã chuẩn hóa</div>
<div style="left:513px;top:559px;width:0;height:26px;border-left:1px dotted #8a8a8a"></div>
<div style="left:515px;top:573px;width:10px;height:0;border-top:1px dotted #8a8a8a"></div>
<div class="t13" style="left:530px;top:560px">TS00182</div>
<div class="t13" style="left:680px;top:560px">Máy in Piper</div>
<div class="t13" style="left:880px;top:560px">Máy in</div>
<div class="t13" style="left:1044px;top:560px">Phòng kế toán</div>
<div class="t13" style="left:1028px;top:560px;width:300px;text-align:right">1,0</div>
<div class="t13" style="left:1188px;top:560px;width:300px;text-align:right;letter-spacing:0">32.000.000</div>
<div class="cb" style="left:295px;top:595px;border-color:#e3dcdc;background:#fbf3f3"></div>
<div class="t13" style="left:320px;top:595px;width:49px;text-align:center">11</div>
<div class="t13" style="left:380px;top:595px">Đã chuẩn hóa</div>
<div style="left:513px;top:594px;width:0;height:26px;border-left:1px dotted #8a8a8a"></div>
<div style="left:515px;top:608px;width:10px;height:0;border-top:1px dotted #8a8a8a"></div>
<div class="t13" style="left:530px;top:595px">TS00181</div>
<div class="t13" style="left:680px;top:595px">Máy vi tính để bàn Lighter</div>
<div class="t13" style="left:880px;top:595px">Máy vi tính để bàn</div>
<div class="t13" style="left:1044px;top:595px">Phòng kế toán</div>
<div class="t13" style="left:1028px;top:595px;width:300px;text-align:right">1,0</div>
<div class="t13" style="left:1188px;top:595px;width:300px;text-align:right;letter-spacing:0">35.000.000</div>
<div style="left:1566px;top:288px;width:15px;height:90px;border-radius:8px 0 0 8px;background:#4563ec"></div>
<svg style="left:1571px;top:328px" width="6" height="10" viewBox="0 0 6 10"><path d="M5 1 L1 5 L5 9" fill="none" stroke="#fff" stroke-width="1.5"/></svg>
<div class="t13" style="left:303px;top:637px;color:#4560ea;-webkit-text-stroke:0.3px #4560ea;letter-spacing:0px">Lịch sử biến động</div>
<div class="t13" style="left:439px;top:637px">Thông tin kê khai</div>
<div class="t13" style="left:569px;top:637px">Tệp đính kèm</div>
<div style="left:303px;top:660px;width:104px;height:2px;background:#4a62eb"></div>
<div style="left:287px;top:663px;width:1293px;height:35px;background:#f4f4f4"></div>
<div style="left:287px;top:698px;width:1293px;height:1px;background:#e3e3e3"></div>
<div style="left:287px;top:733px;width:1293px;height:1px;background:#e3e3e3"></div>
<div style="left:346px;top:663px;width:1px;height:71px;background:#e6e6e6"></div>
<div style="left:466px;top:663px;width:1px;height:71px;background:#e6e6e6"></div>
<div style="left:616px;top:663px;width:1px;height:71px;background:#e6e6e6"></div>
<div style="left:766px;top:663px;width:1px;height:71px;background:#e6e6e6"></div>
<div style="left:1060px;top:663px;width:1px;height:71px;background:#e6e6e6"></div>
<div style="left:1210px;top:663px;width:1px;height:71px;background:#e6e6e6"></div>
<div style="left:1360px;top:663px;width:1px;height:71px;background:#e6e6e6"></div>
<div style="left:1510px;top:663px;width:1px;height:71px;background:#e6e6e6"></div>
<div class="b t13" style="left:287px;top:673px;width:59px;text-align:center">STT</div>
<div class="b t13" style="left:357px;top:673px">Số chứng từ</div>
<div class="b t13" style="left:466px;top:673px;width:150px;text-align:center">Ngày chứng từ</div>
<div class="b t13" style="left:616px;top:673px;width:150px;text-align:center">Ngày biến động</div>
<div class="b t13" style="left:777px;top:673px">Nội dung</div>
<div class="b t13" style="left:900px;top:673px;width:300px;text-align:right">Nguyên giá</div>
<div class="b t13" style="left:1050px;top:673px;width:300px;text-align:right">Số tiền thực hiện</div>
<div class="b t13" style="left:1200px;top:673px;width:300px;text-align:right">Giá trị HM/KH</div>
<div style="left:1568px;top:673px;width:12px;height:16px;overflow:hidden"><div class="b t13" style="left:0;top:0">HM</div></div>
<div class="t13" style="left:287px;top:709px;width:59px;text-align:center">1</div>
<div class="t13" style="left:466px;top:709px;width:150px;text-align:center;letter-spacing:0.25px">01/01/2023</div>
<div class="t13" style="left:616px;top:709px;width:150px;text-align:center;letter-spacing:0.25px">01/01/2023</div>
<div class="t13" style="left:777px;top:709px;letter-spacing:0">Cập nhật loại tài sản theo Thông tư 23/2023/TT...</div>
<div style="left:1571px;top:586px;width:10px;height:202px;background:linear-gradient(90deg,rgba(0,0,0,0),rgba(0,0,0,0.09))"></div>
<div style="left:219px;top:788px;width:1362px;height:14px;background:#d3d8e0"></div>
</body></html>
